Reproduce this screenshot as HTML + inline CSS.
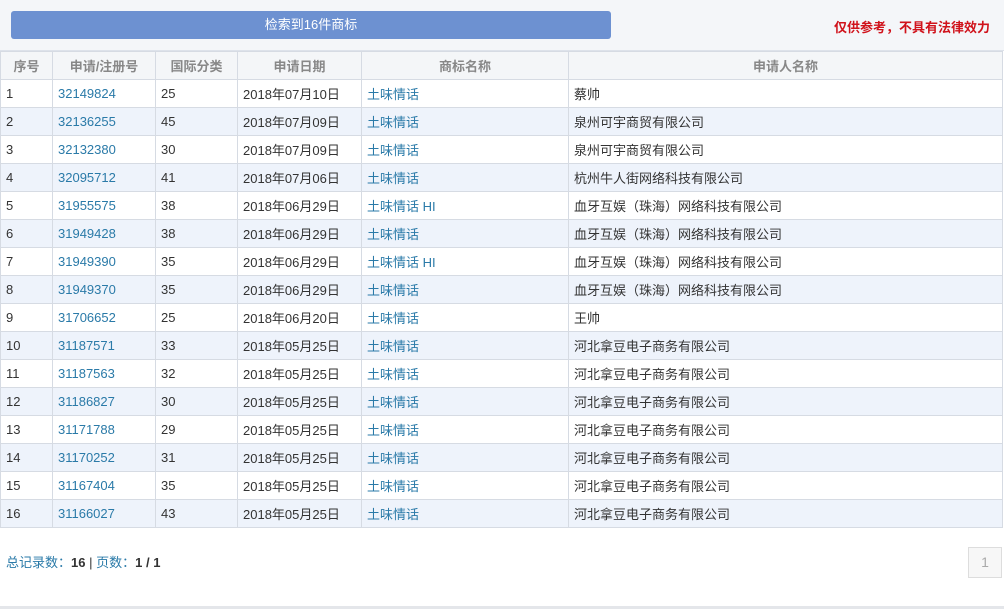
<!DOCTYPE html>
<html><head><meta charset="utf-8"><style>
*{margin:0;padding:0;box-sizing:border-box}
body{width:1004px;height:609px;background:#fff;font-family:"Liberation Sans","Noto Sans CJK SC",sans-serif;font-size:13px;color:#333;position:relative;overflow:hidden}
.top{position:absolute;left:0;top:0;width:1004px;height:51px;background:#f4f6f9;border-bottom:1px solid #dde2ea}
.btn{position:absolute;left:11px;top:11px;width:600px;height:28px;background:#6d91d1;border-radius:3px;color:#fff;text-align:center;line-height:28px;font-size:13px}
.warn{position:absolute;right:14px;top:17px;color:#d0121b;font-weight:bold;font-size:13px}
table{position:absolute;left:0;top:51px;width:1003px;border-collapse:collapse;table-layout:fixed}
td,th{height:28px;border:1px solid #d6dbe3;padding:0 5px;white-space:nowrap;font-weight:normal;text-align:left}
th{background:#f4f6f8;color:#888;font-weight:bold;text-align:center}
tr:nth-child(odd) td{background:#eef3fb}
tr td{background:#fff}
a{color:#2a7aa8;text-decoration:none}
.foot{position:absolute;left:6px;top:552px;color:#2a7aa8;font-size:13px}
.foot b{color:#333}
.pg{position:absolute;left:968px;top:547px;width:34px;height:31px;border:1px solid #ddd;background:#f7f7f7;color:#aaa;text-align:center;line-height:29px;font-size:14px}
.bl{position:absolute;left:0;top:606px;width:1004px;height:3px;background:#e4e6ea}
</style></head><body>
<div class="top"><div class="btn">检索到16件商标</div><div class="warn">仅供参考，不具有法律效力</div></div>
<table>
<colgroup><col style="width:52px"><col style="width:103px"><col style="width:82px"><col style="width:124px"><col style="width:207px"><col></colgroup>
<tr><th>序号</th><th>申请/注册号</th><th>国际分类</th><th>申请日期</th><th>商标名称</th><th>申请人名称</th></tr>
<tr><td>1</td><td><a>32149824</a></td><td>25</td><td>2018年07月10日</td><td><a>土味情话</a></td><td>蔡帅</td></tr>
<tr><td>2</td><td><a>32136255</a></td><td>45</td><td>2018年07月09日</td><td><a>土味情话</a></td><td>泉州可宇商贸有限公司</td></tr>
<tr><td>3</td><td><a>32132380</a></td><td>30</td><td>2018年07月09日</td><td><a>土味情话</a></td><td>泉州可宇商贸有限公司</td></tr>
<tr><td>4</td><td><a>32095712</a></td><td>41</td><td>2018年07月06日</td><td><a>土味情话</a></td><td>杭州牛人街网络科技有限公司</td></tr>
<tr><td>5</td><td><a>31955575</a></td><td>38</td><td>2018年06月29日</td><td><a>土味情话 HI</a></td><td>血牙互娱（珠海）网络科技有限公司</td></tr>
<tr><td>6</td><td><a>31949428</a></td><td>38</td><td>2018年06月29日</td><td><a>土味情话</a></td><td>血牙互娱（珠海）网络科技有限公司</td></tr>
<tr><td>7</td><td><a>31949390</a></td><td>35</td><td>2018年06月29日</td><td><a>土味情话 HI</a></td><td>血牙互娱（珠海）网络科技有限公司</td></tr>
<tr><td>8</td><td><a>31949370</a></td><td>35</td><td>2018年06月29日</td><td><a>土味情话</a></td><td>血牙互娱（珠海）网络科技有限公司</td></tr>
<tr><td>9</td><td><a>31706652</a></td><td>25</td><td>2018年06月20日</td><td><a>土味情话</a></td><td>王帅</td></tr>
<tr><td>10</td><td><a>31187571</a></td><td>33</td><td>2018年05月25日</td><td><a>土味情话</a></td><td>河北拿豆电子商务有限公司</td></tr>
<tr><td>11</td><td><a>31187563</a></td><td>32</td><td>2018年05月25日</td><td><a>土味情话</a></td><td>河北拿豆电子商务有限公司</td></tr>
<tr><td>12</td><td><a>31186827</a></td><td>30</td><td>2018年05月25日</td><td><a>土味情话</a></td><td>河北拿豆电子商务有限公司</td></tr>
<tr><td>13</td><td><a>31171788</a></td><td>29</td><td>2018年05月25日</td><td><a>土味情话</a></td><td>河北拿豆电子商务有限公司</td></tr>
<tr><td>14</td><td><a>31170252</a></td><td>31</td><td>2018年05月25日</td><td><a>土味情话</a></td><td>河北拿豆电子商务有限公司</td></tr>
<tr><td>15</td><td><a>31167404</a></td><td>35</td><td>2018年05月25日</td><td><a>土味情话</a></td><td>河北拿豆电子商务有限公司</td></tr>
<tr><td>16</td><td><a>31166027</a></td><td>43</td><td>2018年05月25日</td><td><a>土味情话</a></td><td>河北拿豆电子商务有限公司</td></tr>
</table>
<div class="foot">总记录数：<b>16</b> <span style="color:#333">|</span> 页数：<b>1 / 1</b></div>
<div class="pg">1</div>
<div class="bl"></div>
</body></html>
